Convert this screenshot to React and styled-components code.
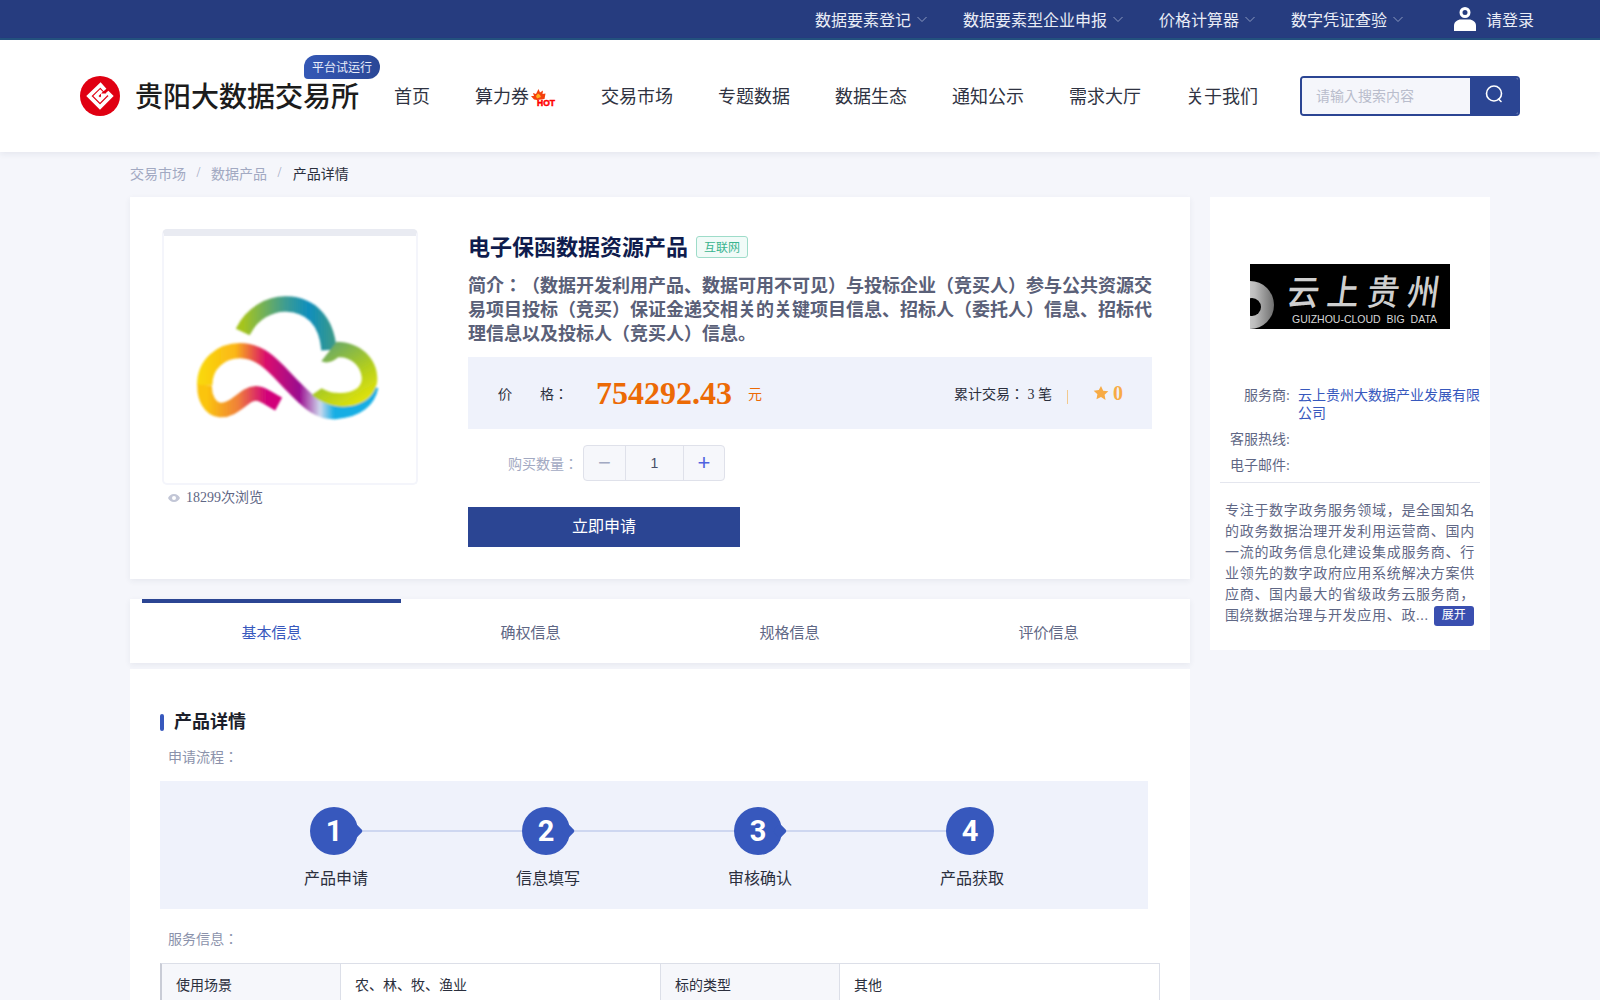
import React from 'react';
import styled, { createGlobalStyle } from 'styled-components';

const Global = createGlobalStyle`
  html, body { margin: 0; padding: 0; }
  body {
    background: #f5f6fb;
    font-family: "Liberation Serif", "Noto Sans CJK JP", serif;
    font-size: 14px;
    color: #2b2f3d;
    text-spacing-trim: space-all;
  }
  * { box-sizing: border-box; }
`;

const Page = styled.div`
  width: 1600px;
  height: 1000px;
  overflow: hidden;
`;

const TopBar = styled.div`
  height: 40px;
  background: #263c7f;
  border-bottom: 2px solid #24527f;
  display: flex;
  justify-content: flex-end;
  align-items: center;
  padding-right: 66px;
  color: #e9ecf6;
  font-size: 16px;
`;

const TopItem = styled.div`
  display: flex;
  align-items: center;
  gap: 6px;
  margin-right: 36px;
  svg { color: #8b99c0; }
`;

const Login = styled.div`
  display: flex;
  align-items: center;
  gap: 10px;
  margin-left: 15px;
`;

const Header = styled.header`
  height: 112px;
  background: #fff;
  box-shadow: 0 2px 6px rgba(40, 50, 90, 0.08);
  display: flex;
  align-items: center;
  padding: 0 80px;
  position: relative;
`;

const Brand = styled.div`
  display: flex;
  align-items: center;
  gap: 15px;
  position: relative;
  margin-right: 35px;
`;

const BrandName = styled.div`
  font-size: 28px;
  font-weight: 500;
  color: #1c1c1c;
  white-space: nowrap;
  padding-bottom: 2px;
`;

const TrialBadge = styled.div`
  position: absolute;
  left: 224px;
  top: -20px;
  width: 76px;
  height: 24px;
  border-radius: 12px 12px 12px 4px;
  background: linear-gradient(90deg, #3458b6, #2a4796);
  color: #e8edfa;
  font-size: 12px;
  display: flex;
  align-items: center;
  justify-content: center;
`;

const Nav = styled.nav`
  display: flex;
  align-items: center;
  gap: 45px;
  font-size: 18px;
  color: #2f3342;
  padding-bottom: 2px;
`;

const NavItem = styled.div`
  display: flex;
  align-items: center;
  white-space: nowrap;
`;

const Search = styled.div`
  margin-left: auto;
  width: 220px;
  height: 40px;
  display: flex;
  border: 2px solid #2b4593;
  border-radius: 4px;
  overflow: hidden;
`;

const SearchInput = styled.div`
  flex: 1;
  background: #f5f6fb;
  color: #b9bdcc;
  display: flex;
  align-items: center;
  padding: 0 0 2px 14px;
`;

const SearchButton = styled.div`
  width: 48px;
  background: #2b4593;
  color: #fff;
  display: flex;
  align-items: center;
  justify-content: center;
  padding-bottom: 4px;
`;

const Crumbs = styled.div`
  height: 45px;
  padding: 0 0 4px 130px;
  display: flex;
  align-items: center;
  gap: 10.5px;
  color: #a2a9c2;
  span:last-child { color: #2b2f3d; margin-left: 1px; }
`;

const Main = styled.main`
  display: flex;
  gap: 20px;
  padding-left: 130px;
  align-items: flex-start;
`;

const LeftCol = styled.div`
  width: 1060px;
`;

const ProductCard = styled.section`
  height: 382px;
  background: #fff;
  box-shadow: 0 2px 6px rgba(40, 50, 90, 0.07);
  display: flex;
  padding: 32px 38px 0 32px;
`;

const Gallery = styled.div`
  width: 256px;
  margin-right: 50px;
`;

const ImageBox = styled.div`
  width: 256px;
  height: 256px;
  border: 2px solid #f4f5fb;
  border-top: 7px solid #e9ebf2;
  border-radius: 5px;
  overflow: hidden;
  svg { display: block; }
`;

const Views = styled.div`
  display: flex;
  align-items: center;
  gap: 6px;
  padding: 3px 0 0 6px;
  color: #5f6785;
  line-height: 20px;
`;

const Info = styled.div`
  flex: 1;
`;

const TitleRow = styled.div`
  display: flex;
  align-items: center;
  gap: 8px;
  height: 36px;
  margin-top: -2px;
`;

const Title = styled.h1`
  margin: 0;
  font-size: 22px;
  font-weight: 700;
  color: #0f1c4d;
`;

const Tag = styled.span`
  width: 52px;
  height: 22px;
  margin-top: 3px;
  border: 1px solid #9edcc9;
  border-radius: 3px;
  background: #f1fbf8;
  color: #39b48f;
  font-size: 12px;
  display: flex;
  align-items: center;
  justify-content: center;
`;

const Summary = styled.p`
  margin: 11px 0 0;
  font-size: 18px;
  font-weight: 700;
  line-height: 24px;
  color: #5a6078;
`;

const PricePanel = styled.div`
  height: 72px;
  margin-top: 11px;
  background: #eff2fb;
  display: flex;
  align-items: center;
  padding: 0 29px 0 30px;
`;

const PriceLabel = styled.span`
  width: 98px;
  display: flex;
  justify-content: space-between;
  padding-right: 28px;
  white-space: nowrap;
  color: #2b2f3d;
`;

const Price = styled.span`
  font-size: 32px;
  font-weight: 700;
  color: #ec6a05;
`;

const Unit = styled.span`
  margin-left: 16px;
  color: #ec6a05;
`;

const Stats = styled.div`
  margin-left: auto;
  display: flex;
  align-items: center;
  color: #2b2f3d;
`;

const Divider = styled.span`
  width: 1px;
  height: 14px;
  margin: 8px 25px 0 15px;
  background: #f2c98e;
`;

const Score = styled.span`
  display: flex;
  align-items: center;
  gap: 4px;
  font-size: 20px;
  font-weight: 700;
  color: #f7ab45;
`;

const QtyRow = styled.div`
  display: flex;
  align-items: center;
  margin: 16px 0 0 40px;
  color: #a2a9c2;
`;

const Stepper = styled.div`
  width: 142px;
  height: 36px;
  margin-left: 5px;
  display: grid;
  grid-template-columns: 41px 1fr 41px;
  border: 1px solid #dfe1ea;
  border-radius: 4px;
  background: #f6f7fb;
`;

const StepCell = styled.div`
  display: flex;
  align-items: center;
  justify-content: center;
  font-family: "Liberation Sans", sans-serif;
  color: ${p => p.$color || '#4a5068'};
  font-size: ${p => (p.$big ? '22px' : '14px')};
  & + & { border-left: 1px solid #dfe1ea; }
`;

const Apply = styled.div`
  width: 272px;
  height: 40px;
  margin-top: 26px;
  padding-bottom: 4px;
  background: #2b4593;
  color: #fff;
  font-size: 16px;
  display: flex;
  align-items: center;
  justify-content: center;
`;

const Tabs = styled.div`
  height: 64px;
  margin-top: 20px;
  padding: 0 12px;
  background: #fff;
  box-shadow: 0 2px 6px rgba(40, 50, 90, 0.07);
  display: grid;
  grid-template-columns: repeat(4, 259px);
`;

const Tab = styled.div`
  border-top: 4px solid ${p => (p.$active ? '#2b4593' : 'transparent')};
  color: ${p => (p.$active ? '#3758bd' : '#5f6785')};
  font-size: 15px;
  display: flex;
  align-items: center;
  justify-content: center;
  padding-bottom: 4px;
`;

const DetailCard = styled.section`
  margin-top: 6px;
  background: #fff;
  padding: 42px 30px 0 30px;
  height: 400px;
`;

const Heading = styled.h2`
  margin: 0;
  font-size: 18px;
  font-weight: 700;
  color: #1c1f2b;
  line-height: 22px;
  display: flex;
  align-items: center;
  gap: 10px;
  &::before {
    content: '';
    width: 4px;
    height: 17px;
    border-radius: 2px;
    background: #3758bd;
  }
`;

const SubLabel = styled.div`
  color: #8b92ab;
  padding-left: 8px;
  line-height: 20px;
  margin-top: ${p => p.$top}px;
`;

const StepsPanel = styled.div`
  width: 988px;
  height: 128px;
  margin-top: 13px;
  background: #eff2fb;
  display: flex;
  padding: 26px 0 0 150px;
`;

const Step = styled.div`
  width: 212px;
  flex-shrink: 0;
  position: relative;
`;

const StepDot = styled.div`
  width: 48px;
  height: 48px;
  border-radius: 50%;
  background: #3758bd;
  color: #fff;
  font-family: "Roboto", "Liberation Sans", sans-serif;
  font-size: 29px;
  font-weight: 700;
  display: flex;
  align-items: center;
  justify-content: center;
  position: relative;
  z-index: 1;
  &::after {
    content: '';
    display: ${p => (p.$last ? 'none' : 'block')};
    position: absolute;
    right: -3px;
    top: 19px;
    width: 10px;
    height: 10px;
    border-radius: 2px;
    background: #3758bd;
    transform: rotate(45deg);
    z-index: -1;
  }
`;

const StepLine = styled.div`
  position: absolute;
  left: 50px;
  top: 23px;
  width: 170px;
  height: 2px;
  background: #ced7f0;
`;

const StepName = styled.div`
  width: 64px;
  margin: 12px 0 0 -6px;
  font-size: 16px;
  line-height: 24px;
  color: #2b2f3d;
  white-space: nowrap;
`;

const Table = styled.div`
  width: 1000px;
  margin-top: 13px;
  display: grid;
  grid-template-columns: 179px 320px 179px 320px;
  border-top: 1px solid #dcdfe8;
  border-left: 2px solid #c9ccd6;
`;

const Cell = styled.div`
  height: 44px;
  padding: 0 0 4px 14px;
  display: flex;
  align-items: center;
  border-right: 1px solid #dcdfe8;
  border-bottom: 1px solid #dcdfe8;
  background: ${p => (p.$head ? '#f6f7fb' : '#fff')};
  color: #2b2f3d;
`;

const SideCard = styled.aside`
  width: 280px;
  height: 453px;
  background: #fff;
  padding: 67px 10px 0;
`;

const SideLogo = styled.div`
  margin-left: 30px;
  width: 200px;
  height: 65px;
  background: #000;
  position: relative;
  overflow: hidden;
  svg { position: absolute; left: 0; top: 0; }
`;

const LogoCn = styled.div`
  position: absolute;
  left: 38px;
  top: 3px;
  font-family: "Noto Sans CJK SC", sans-serif;
  font-size: 32px;
  font-weight: 500;
  line-height: 46px;
  letter-spacing: 8px;
  color: #cfcfcf;
  white-space: nowrap;
  transform: skewX(-8deg) scaleY(1.1);
`;

const LogoEn = styled.div`
  position: absolute;
  left: 42px;
  top: 49px;
  font-family: "Liberation Sans", sans-serif;
  font-size: 10.5px;
  line-height: 12px;
  word-spacing: 3px;
  color: #d8d8d8;
  white-space: nowrap;
`;

const Facts = styled.div`
  margin-top: 58px;
  padding-bottom: 7px;
  border-bottom: 1px solid #e4e6ee;
`;

const Fact = styled.div`
  display: grid;
  grid-template-columns: 70px 1fr;
  gap: 8px;
  line-height: 18px;
  color: #5f6785;
  & + & { margin-top: 8px; }
  label { text-align: right; }
  span { color: #3758bd; }
`;

const Intro = styled.div`
  width: 252px;
  margin: 17px 0 0 5px;
  line-height: 21px;
  letter-spacing: 0.7px;
  color: #5f6785;
`;

const Expand = styled.span`
  display: inline-flex;
  vertical-align: 1px;
  margin-left: 5px;
  width: 40px;
  height: 20px;
  border-radius: 3px;
  background: #3a4fb0;
  color: #fff;
  font-size: 12px;
  letter-spacing: 0;
  align-items: center;
  justify-content: center;
`;

const Chevron = () => (
  <svg width="10" height="10" viewBox="0 0 10 10" fill="none" stroke="currentColor" strokeWidth="1">
    <path d="M0.5 3 L5 7.5 L9.5 3" />
  </svg>
);

const UserIcon = () => (
  <svg width="22" height="24" viewBox="0 0 22 24" fill="#fff">
    <path fillRule="evenodd" d="M11 0a5.5 5.5 0 1 1 0 11a5.5 5.5 0 0 1 0-11zm0 3a2.5 2.5 0 1 0 0 5a2.5 2.5 0 0 0 0-5z" />
    <path d="M0 24v-5.500C0 15 3.500 12.500 7 12.500h8c3.500 0 7 2.500 7 6V24z" />
  </svg>
);

const LogoMark = () => (
  <svg width="40" height="40" viewBox="0 0 40 40">
    <circle cx="20" cy="20" r="20" fill="#e00012" />
    <g fill="none" stroke="#fff" strokeWidth="3.800" strokeMiterlimit="6">
      <path d="M25 14 L20.500 9 L9 20 L20 31 L31 20 L27 16" />
      <path d="M21.500 14.500 L16 20 L20 24 L24.500 19.500 L21 19.500" />
    </g>
  </svg>
);

const HotMark = () => (
  <svg width="25" height="18" viewBox="0 0 25 18" style={{ marginLeft: 2, marginTop: 6 }}>
    <path d="M0 7 L3 7 L2 4 L5 5 L7.500 0 L9 3.500 L12 1.500 L11.500 5 L14.500 4.500 L13.500 10 L6 11 L3 10.500 Z" fill="#f4400c" />
    <path d="M5 7 L7 4.500 L9 6 L10 8 L6 9.500 Z" fill="#ffb020" />
    <text x="6" y="16.500" fontFamily="Liberation Sans" fontSize="8.500" fontWeight="700" stroke="#f00" strokeWidth="0.500" fill="#f00">HOT</text>
  </svg>
);

const SearchIcon = () => (
  <svg width="20" height="20" viewBox="0 0 20 20" fill="none" stroke="#fff" strokeWidth="1.6">
    <circle cx="10" cy="9.500" r="7.500" />
    <path d="M14.500 15 L17 17.500" strokeLinecap="round" />
  </svg>
);

const CloudLogo = () => (
  <svg width="252" height="247" viewBox="102 108 756 741">
    <defs>
      <linearGradient id="ribbon" gradientUnits="userSpaceOnUse" x1="210" y1="0" x2="740" y2="0">
        <stop offset="0" stopColor="#f9d80c" />
        <stop offset="0.2" stopColor="#fbb715" />
        <stop offset="0.38" stopColor="#d8086f" />
        <stop offset="0.56" stopColor="#9b0a8e" />
        <stop offset="0.68" stopColor="#cdd9ee" />
        <stop offset="0.76" stopColor="#12aee4" />
        <stop offset="1" stopColor="#12aee4" />
      </linearGradient>
      <linearGradient id="arc" gradientUnits="userSpaceOnUse" x1="340" y1="0" x2="620" y2="0">
        <stop offset="0" stopColor="#a5c41f" />
        <stop offset="0.45" stopColor="#3e9c92" />
        <stop offset="0.7" stopColor="#0f8ebd" />
        <stop offset="1" stopColor="#3f9a83" />
      </linearGradient>
      <linearGradient id="lobe" gradientUnits="userSpaceOnUse" x1="600" y1="440" x2="700" y2="600">
        <stop offset="0" stopColor="#6dab62" />
        <stop offset="0.6" stopColor="#b4cf1c" />
        <stop offset="1" stopColor="#dfe20c" />
      </linearGradient>
      <linearGradient id="tail" gradientUnits="userSpaceOnUse" x1="230" y1="0" x2="440" y2="0">
        <stop offset="0" stopColor="#fbc40d" />
        <stop offset="0.45" stopColor="#f0803a" />
        <stop offset="0.85" stopColor="#d2047a" />
      </linearGradient>
      <filter id="soft"><feGaussianBlur stdDeviation="2.500" /></filter>
    </defs>
    <g fill="none" filter="url(#soft)">
      <path d="M224 555 C224 490 275 452 330 452 C400 452 440 510 490 560 C530 600 565 640 620 634 C680 630 715 600 722 560" stroke="url(#ribbon)" strokeWidth="46" />
      <path d="M446 612 C405 590 385 568 352 588 C320 610 300 632 270 630 C238 626 222 590 224 555" stroke="url(#tail)" strokeWidth="44" />
      <path d="M338 396 C365 340 420 310 470 312 C540 314 590 360 597 450" stroke="url(#arc)" strokeWidth="46" />
      <path fill="url(#lobe)" stroke="none" d="M574 484 L620 425 C690 425 742 475 742 535 C742 585 700 620 640 620 C600 620 570 605 545 585 L575 565 C600 580 620 580 645 578 C680 574 698 555 695 530 C690 495 660 470 625 472 C610 485 590 492 574 484 Z" />
    </g>
  </svg>
);

const EyeIcon = () => (
  <svg width="12" height="10" viewBox="0 0 12 10">
    <path fillRule="evenodd" fill="#c2c6d6" d="M6 1c3 0 5 2 6 4c-1 2-3 4-6 4s-5-2-6-4c1-2 3-4 6-4zm0 2a2 2 0 1 0 0 4a2 2 0 0 0 0-4z" />
  </svg>
);

const StarIcon = () => (
  <svg width="16" height="16" viewBox="0 0 24 24" fill="#f7ab45">
    <path d="M12 1.500l3.300 7 7.700 1-5.600 5.300 1.400 7.700L12 18l-6.800 3.500 1.400-7.700L1 8.500l7.700-1z" />
  </svg>
);

const topLinks = ['数据要素登记', '数据要素型企业申报', '价格计算器', '数字凭证查验'];
const navLinks = ['交易市场', '专题数据', '数据生态', '通知公示', '需求大厅', '关于我们'];
const steps = ['产品申请', '信息填写', '审核确认', '产品获取'];
const tabs = ['基本信息', '确权信息', '规格信息', '评价信息'];

export default function App() {
  return (
    <Page>
      <Global />
      <TopBar>
        {topLinks.map(t => (
          <TopItem key={t}>{t}<Chevron /></TopItem>
        ))}
        <Login><UserIcon />请登录</Login>
      </TopBar>
      <Header>
        <Brand>
          <LogoMark />
          <BrandName>贵阳大数据交易所</BrandName>
          <TrialBadge>平台试运行</TrialBadge>
        </Brand>
        <Nav>
          <NavItem>首页</NavItem>
          <NavItem>算力券<HotMark /></NavItem>
          {navLinks.map(t => <NavItem key={t}>{t}</NavItem>)}
        </Nav>
        <Search>
          <SearchInput>请输入搜索内容</SearchInput>
          <SearchButton><SearchIcon /></SearchButton>
        </Search>
      </Header>
      <Crumbs>
        <span>交易市场</span><span>/</span><span>数据产品</span><span>/</span><span>产品详情</span>
      </Crumbs>
      <Main>
        <LeftCol>
          <ProductCard>
            <Gallery>
              <ImageBox><CloudLogo /></ImageBox>
              <Views><EyeIcon />18299次浏览</Views>
            </Gallery>
            <Info>
              <TitleRow>
                <Title>电子保函数据资源产品</Title>
                <Tag>互联网</Tag>
              </TitleRow>
              <Summary>简介：（数据开发利用产品、数据可用不可见）与投标企业（竞买人）参与公共资源交易项目投标（竞买）保证金递交相关的关键项目信息、招标人（委托人）信息、招标代理信息以及投标人（竞买人）信息。</Summary>
              <PricePanel>
                <PriceLabel><span>价</span><span>格：</span></PriceLabel>
                <Price>754292.43</Price>
                <Unit>元</Unit>
                <Stats>
                  累计交易： 3 笔
                  <Divider />
                  <Score><StarIcon />0</Score>
                </Stats>
              </PricePanel>
              <QtyRow>
                购买数量：
                <Stepper>
                  <StepCell $big $color="#a2a9c2">−</StepCell>
                  <StepCell>1</StepCell>
                  <StepCell $big $color="#4f63e0">+</StepCell>
                </Stepper>
              </QtyRow>
              <Apply>立即申请</Apply>
            </Info>
          </ProductCard>
          <Tabs>
            {tabs.map((t, i) => <Tab key={t} $active={i === 0}>{t}</Tab>)}
          </Tabs>
          <DetailCard>
            <Heading>产品详情</Heading>
            <SubLabel $top={15}>申请流程：</SubLabel>
            <StepsPanel>
              {steps.map((s, i) => (
                <Step key={s}>
                  {i < 3 && <StepLine />}
                  <StepDot $last={i === 3}>{i + 1}</StepDot>
                  <StepName>{s}</StepName>
                </Step>
              ))}
            </StepsPanel>
            <SubLabel $top={21}>服务信息：</SubLabel>
            <Table>
              <Cell $head>使用场景</Cell>
              <Cell>农、林、牧、渔业</Cell>
              <Cell $head>标的类型</Cell>
              <Cell>其他</Cell>
            </Table>
          </DetailCard>
        </LeftCol>
        <SideCard>
          <SideLogo>
            <svg width="200" height="65" viewBox="0 0 200 65">
              <defs>
                <linearGradient id="swirl" x1="0" y1="0" x2="1" y2="0">
                  <stop offset="0" stopColor="#f2f2f2" />
                  <stop offset="0.6" stopColor="#bdbdbd" />
                  <stop offset="1" stopColor="#6e6e6e" />
                </linearGradient>
              </defs>
              <circle cx="0" cy="41" r="24" fill="url(#swirl)" />
              <circle cx="2" cy="43" r="9" fill="#000" />
            </svg>
            <LogoCn>云上贵州</LogoCn>
            <LogoEn>GUIZHOU-CLOUD BIG DATA</LogoEn>
          </SideLogo>
          <Facts>
            <Fact><label>服务商:</label><span>云上贵州大数据产业发展有限公司</span></Fact>
            <Fact><label>客服热线:</label><span /></Fact>
            <Fact><label>电子邮件:</label><span /></Fact>
          </Facts>
          <Intro>
            专注于数字政务服务领域，是全国知名的政务数据治理开发利用运营商、国内一流的政务信息化建设集成服务商、行业领先的数字政府应用系统解决方案供应商、国内最大的省级政务云服务商，围绕数据治理与开发应用、政...
            <Expand>展开</Expand>
          </Intro>
        </SideCard>
      </Main>
    </Page>
  );
}
